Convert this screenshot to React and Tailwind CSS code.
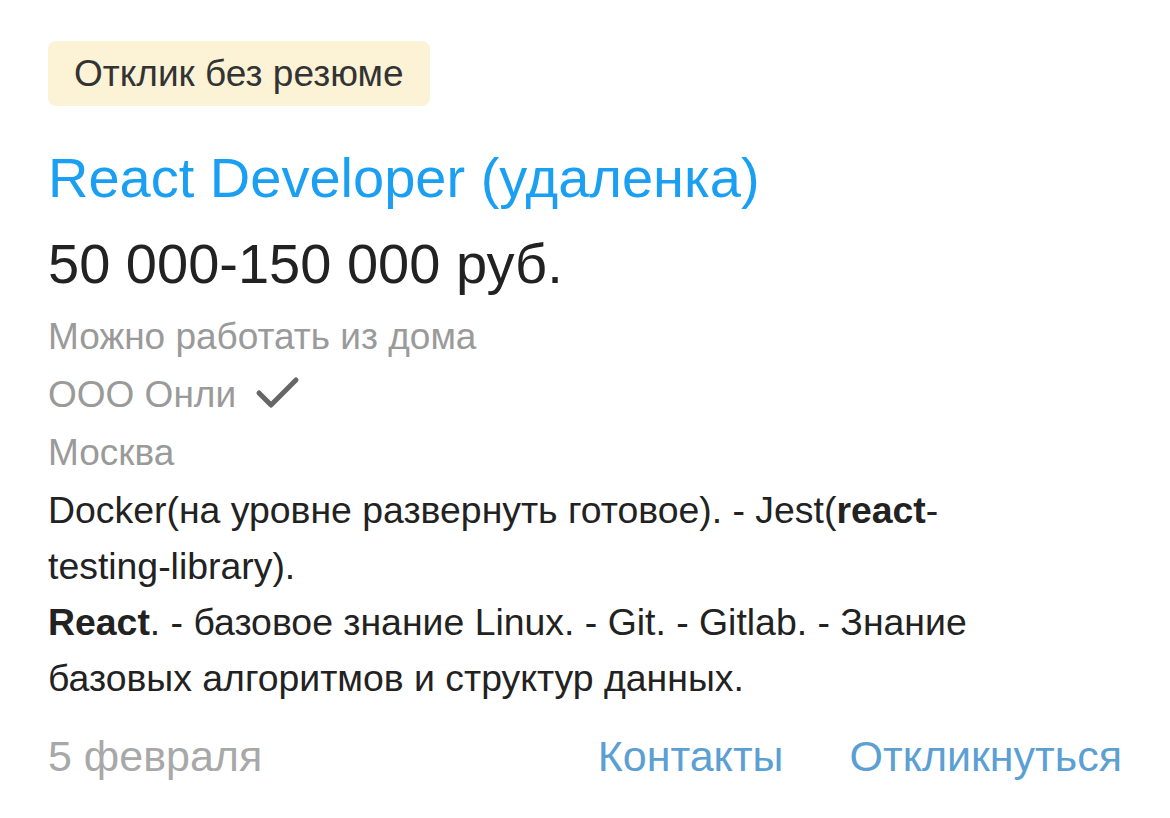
export default function App() {
  return (
    <div className="w-[1170px] h-[818px] bg-white overflow-hidden font-['Liberation_Sans',Arial,sans-serif]">
      <div className="px-[48px] pt-[41px]">
        <div className="inline-flex items-center h-[65px] px-[26px] rounded-[8px] bg-[#fcf3d7] text-[37px] text-[#333333]">
          Отклик без резюме
        </div>
        <div className="mt-[42px] text-[56px] leading-[60px] text-[#1a9ff2]">React Developer (удаленка)</div>
        <div className="mt-[26px] text-[56px] leading-[60px] text-[#222222]">50 000-150 000 руб.</div>
        <div className="mt-[14px] text-[37px] leading-[58px] text-[#9a9a9a]">
          <div>Можно работать из дома</div>
          <div className="flex items-center gap-[18px]">
            <span>ООО Онли</span>
            <svg width="46" height="36" viewBox="0 0 46 36" className="-mt-[4px]">
              <path d="M5 18 L17 30 L42 5" fill="none" stroke="#666666" strokeWidth="5" strokeLinecap="round" strokeLinejoin="round" />
            </svg>
          </div>
          <div>Москва</div>
        </div>
        <div className="text-[37.4px] leading-[56px] text-[#222222] max-w-[980px]">
          <p>Docker(на уровне развернуть готовое). - Jest(<b>react</b>-testing-library).</p>
          <p><b>React</b>. - базовое знание Linux. - Git. - Gitlab. - Знание базовых алгоритмов и структур данных.</p>
        </div>
        <div className="mt-[25px] flex items-center text-[43px] leading-[50px]">
          <span className="text-[#a8a8a8]">5 февраля</span>
          <span className="ml-auto text-[#5b9fd3]">Контакты</span>
          <span className="ml-[66px] text-[#5b9fd3]">Откликнуться</span>
        </div>
      </div>
    </div>
  );
}
